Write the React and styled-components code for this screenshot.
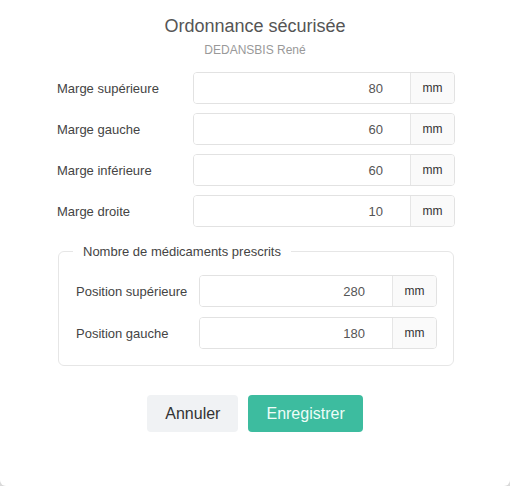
import React from "react";
import styled, { createGlobalStyle } from "styled-components";

const Global = createGlobalStyle`
  html, body { margin: 0; padding: 0; background: #d9d9d9; }
  body { font-family: "Liberation Sans", Arial, sans-serif; }
  * { box-sizing: border-box; }
`;

const Dialog = styled.div`
  width: 510px;
  height: 486px;
  background: #fff;
  border-radius: 0 0 6px 6px;
  display: flex;
  flex-direction: column;
  align-items: center;
  padding-top: 16px;
`;

const Title = styled.h1`
  margin: 0;
  font-size: 18px;
  line-height: 21px;
  font-weight: normal;
  color: #555;
`;

const Subtitle = styled.div`
  margin-top: 6px;
  font-size: 12px;
  line-height: 14px;
  color: #999;
`;

const Form = styled.div`
  width: 398px;
  margin-top: 15px;
  margin-left: 2px;
  display: flex;
  flex-direction: column;
  gap: 9px;
`;

const Row = styled.div`
  display: flex;
  align-items: center;
  height: 32px;
`;

const Label = styled.label`
  width: ${(p) => p.$w}px;
  flex: none;
  font-size: 13px;
  color: #444;
`;

const Group = styled.div`
  flex: 1;
  min-width: 0;
  display: flex;
  height: 32px;
  border: 1px solid #e2e2e2;
  border-radius: 4px;
  overflow: hidden;
`;

const Input = styled.input`
  flex: 1;
  width: 0;
  min-width: 0;
  border: none;
  outline: none;
  text-align: right;
  padding: 0 27px 0 8px;
  font-family: "Liberation Sans", Arial, sans-serif;
  font-size: 13px;
  color: #555;
  background: #fff;
`;

const Addon = styled.span`
  width: 44px;
  flex: none;
  display: flex;
  align-items: center;
  justify-content: center;
  border-left: 1px solid #e6e6e6;
  background: #fafafa;
  font-size: 12px;
  color: #333;
`;

const Fieldset = styled.fieldset`
  min-width: 0;
  margin: 8px 1px 0 1px;
  padding: 16px 16px 16px 17px;
  border: 1px solid #e6e6e6;
  border-radius: 6px;
  display: flex;
  flex-direction: column;
  gap: 10px;
`;

const Legend = styled.legend`
  margin-left: -3px;
  padding: 0 10px;
  font-size: 13px;
  line-height: 15px;
  color: #444;
`;

const Actions = styled.div`
  margin-top: 29px;
  display: flex;
  gap: 10px;
`;

const Button = styled.button`
  height: 37px;
  padding: 0 ${(p) => p.$px}px;
  border: none;
  border-radius: 4px;
  font-family: "Liberation Sans", Arial, sans-serif;
  font-size: 16px;
  background: ${(p) => (p.$primary ? "#3dbc9f" : "#f0f2f4")};
  color: ${(p) => (p.$primary ? "#eefdf8" : "#333")};
  cursor: pointer;
`;

const Field = ({ label, value, w }) => (
  <Row>
    <Label $w={w}>{label}</Label>
    <Group>
      <Input defaultValue={value} />
      <Addon>mm</Addon>
    </Group>
  </Row>
);

export default function App() {
  return (
    <>
      <Global />
      <Dialog>
        <Title>Ordonnance sécurisée</Title>
        <Subtitle>DEDANSBIS René</Subtitle>
        <Form>
          <Field label="Marge supérieure" value="80" w={136} />
          <Field label="Marge gauche" value="60" w={136} />
          <Field label="Marge inférieure" value="60" w={136} />
          <Field label="Marge droite" value="10" w={136} />
          <Fieldset>
            <Legend>Nombre de médicaments prescrits</Legend>
            <Field label="Position supérieure" value="280" w={123} />
            <Field label="Position gauche" value="180" w={123} />
          </Fieldset>
        </Form>
        <Actions>
          <Button $px={18}>Annuler</Button>
          <Button $primary $px={18}>Enregistrer</Button>
        </Actions>
      </Dialog>
    </>
  );
}
